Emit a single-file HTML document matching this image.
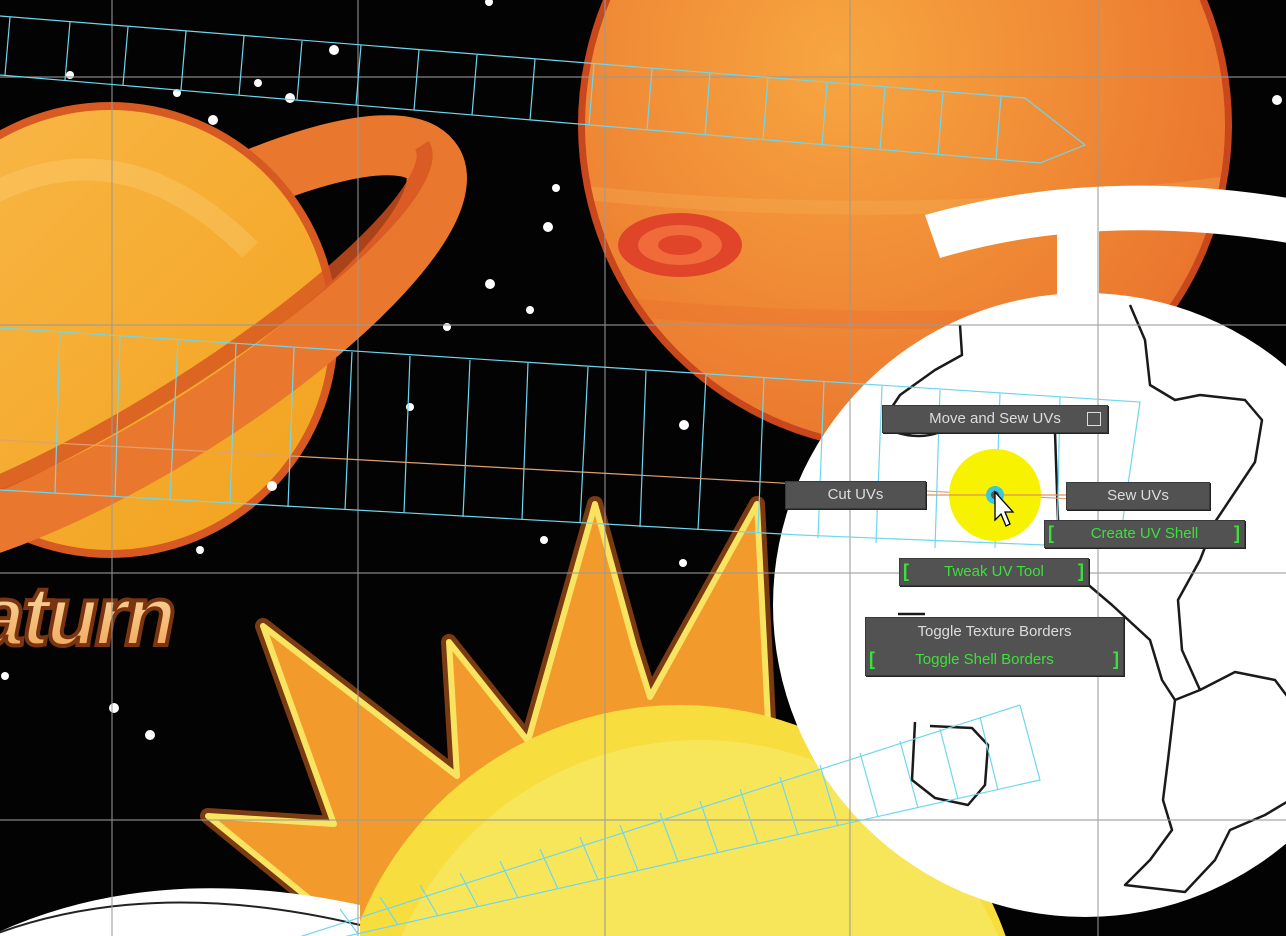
<!DOCTYPE html>
<html><head><meta charset="utf-8"><style>
html,body{margin:0;padding:0;background:#000;overflow:hidden;}
.wrap{position:relative;width:1286px;height:936px;overflow:hidden;background:#030303;}
svg{position:absolute;left:0;top:0;}
.mb{position:absolute;background:#525252;border:1px solid #3a3a3a;box-shadow:1px 1px 0 #222;font-family:"Liberation Sans",sans-serif;font-size:15px;color:#dcdcdc;text-align:center;line-height:26px;height:26px;}
.g{color:#3ce03c;}
.br{position:absolute;top:0;color:#3ce03c;font-weight:bold;font-size:18px;line-height:24px;}
</style></head><body><div class="wrap">
<svg width="1286" height="936" viewBox="0 0 1286 936">
<defs>
<radialGradient id="jup" cx="0.4" cy="0.4" r="0.7"><stop offset="0" stop-color="#f7a640"/><stop offset="1" stop-color="#e9712c"/></radialGradient>
<linearGradient id="sat" x1="0" y1="0" x2="1" y2="1"><stop offset="0" stop-color="#f9b84a"/><stop offset="1" stop-color="#f2a21c"/></linearGradient>
<linearGradient id="txt" x1="0" y1="0" x2="0" y2="1"><stop offset="0" stop-color="#fbe2b0"/><stop offset="1" stop-color="#f0a050"/></linearGradient>
<clipPath id="jc"><circle cx="905" cy="125" r="320"/></clipPath>
</defs>
<!-- Jupiter -->
<circle cx="905" cy="125" r="327" fill="#c9471c"/>
<circle cx="905" cy="125" r="320" fill="url(#jup)"/>
<g clip-path="url(#jc)">
<path d="M560 190 Q900 230 1250 180" stroke="#f6b458" stroke-width="14" fill="none" opacity=".3"/>
<path d="M560 300 Q900 340 1250 300" stroke="#e86a2a" stroke-width="18" fill="none" opacity=".3"/>
</g>
<ellipse cx="680" cy="245" rx="62" ry="32" fill="#e0452a"/>
<ellipse cx="680" cy="245" rx="42" ry="20" fill="#f06a3a"/>
<ellipse cx="680" cy="245" rx="22" ry="10" fill="#e0452a"/>
<!-- Saturn -->
<g transform="rotate(-32 140 345)">
<ellipse cx="140" cy="345" rx="345" ry="95" fill="none" stroke="#e9782e" stroke-width="60"/>
</g>
<circle cx="110" cy="330" r="228" fill="#d65a22"/>
<circle cx="110" cy="330" r="220" fill="url(#sat)"/>
<path d="M-20 200 Q120 120 250 250" stroke="#fbd27a" stroke-width="22" fill="none" opacity=".35"/>
<g transform="rotate(-32 140 345)">
<path d="M-205 345 A345 95 0 0 0 485 345" fill="none" stroke="#e9782e" stroke-width="60"/>
<path d="M-205 325 A345 75 0 0 0 485 325" fill="none" stroke="#d65420" stroke-width="16" opacity=".8"/>
</g>
<text x="-22" y="645" font-family="Liberation Sans,sans-serif" font-style="italic" font-weight="bold" font-size="84" fill="url(#txt)" stroke="#7a3410" stroke-width="4" letter-spacing="-3">aturn</text>
<!-- stars -->
<g fill="#fff">
<circle cx="70" cy="75" r="4"/><circle cx="177" cy="93" r="4"/><circle cx="258" cy="83" r="4"/><circle cx="290" cy="98" r="5"/><circle cx="334" cy="50" r="5"/><circle cx="213" cy="120" r="5"/><circle cx="489" cy="2" r="4"/><circle cx="556" cy="188" r="4"/><circle cx="548" cy="227" r="5"/><circle cx="490" cy="284" r="5"/><circle cx="530" cy="310" r="4"/><circle cx="447" cy="327" r="4"/><circle cx="410" cy="407" r="4"/><circle cx="684" cy="425" r="5"/><circle cx="272" cy="486" r="5"/><circle cx="200" cy="550" r="4"/><circle cx="544" cy="540" r="4"/><circle cx="683" cy="563" r="4"/><circle cx="5" cy="676" r="4"/><circle cx="114" cy="708" r="5"/><circle cx="150" cy="735" r="5"/><circle cx="288" cy="707" r="4"/><circle cx="1277" cy="100" r="5"/>
</g>
<!-- Sun flames -->
<path d="M360 940 L208 816 L334 824 L263 626 L457 776 L449 642 L528 741 L595 504 L634 646 L650 697 L757 504 L770 760 L600 900Z" fill="#ef8a28" stroke="#7a3a12" stroke-width="16" stroke-linejoin="round"/>
<path d="M360 940 L208 816 L334 824 L263 626 L457 776 L449 642 L528 741 L595 504 L634 646 L650 697 L757 504 L770 760 L600 900Z" fill="#f39a2c" stroke="#f8e460" stroke-width="6" stroke-linejoin="round"/>
<circle cx="680" cy="1050" r="345" fill="#f7de3e"/>
<circle cx="700" cy="1065" r="325" fill="#f8e65a"/>
<!-- white bottom-left arc -->
<path d="M-10 936 Q150 860 360 905 L360 936Z" fill="#fff"/>
<path d="M-10 936 Q150 875 360 925" stroke="#222" stroke-width="2" fill="none"/>
<!-- white globe -->
<circle cx="1085" cy="605" r="312" fill="#fff"/>
<path d="M925 215 Q1100 165 1300 200 L1300 245 Q1100 210 940 258Z" fill="#fff"/>
<rect x="1057" y="225" width="42" height="80" fill="#fff"/>
<!-- continent outlines -->
<g stroke="#1a1a1a" stroke-width="2.5" fill="none" stroke-linejoin="round">
<path d="M960 325 L962 355 L935 370 L900 395 L890 410"/>
<path d="M895 432 Q920 440 940 432"/>
<path d="M1055 432 L1058 520"/>
<path d="M1130 305 L1145 340 L1150 385 L1175 400 L1200 395 L1245 400 L1262 420 L1255 462 L1235 492 L1215 522 L1200 560 L1178 600 L1182 650 L1200 690 L1175 700 L1162 680 L1150 640 L1112 605 L1085 582"/>
<path d="M1200 690 L1235 672 L1275 680 L1290 700"/>
<path d="M1175 700 L1168 760 L1163 800 L1172 830 L1150 860 L1125 885 L1185 892 L1215 860 L1230 830 L1265 815 L1290 800"/>
<path d="M915 722 L912 780 L935 798 L968 805 L985 785 L988 745 L972 728 L930 726"/>
<path d="M898 614 L925 614"/>
</g>
<!-- grid -->
<g stroke="#9a9a9a" stroke-width="1.2" opacity=".85">
<line x1="112" y1="0" x2="112" y2="936"/><line x1="358" y1="0" x2="358" y2="936"/><line x1="605" y1="0" x2="605" y2="936"/><line x1="850" y1="0" x2="850" y2="936"/><line x1="1098" y1="0" x2="1098" y2="936"/>
<line x1="0" y1="77" x2="1286" y2="77"/><line x1="0" y1="325" x2="1286" y2="325"/><line x1="0" y1="573" x2="1286" y2="573"/><line x1="0" y1="820" x2="1286" y2="820"/>
</g>
<!-- UV strips -->
<g stroke="#6fd6ee" stroke-width="1.2" fill="none">
<path d="M0 16 L1025 98 L1085 145 L1040 163 L0 75"/>
<path d="M10 17 L5 75 M70 22 L65 80 M128 27 L123 85 M186 31 L181 90 M244 36 L239 95 M302 41 L297 100 M361 45 L356 105 M419 50 L414 110 M477 55 L472 115 M535 59 L530 120 M594 64 L589 125 M652 69 L647 130 M710 73 L705 135 M768 78 L763 140 M827 83 L822 145 M885 87 L880 150 M943 92 L938 155 M1001 96 L996 160"/>
<path d="M0 328 L1140 402 L1120 540 L1045 545 L800 535 L0 490"/>
<path d="M60 332 L55 493 M120 336 L115 497 M178 340 L170 500 M236 344 L230 503 M294 348 L288 507 M352 352 L345 510 M410 356 L404 513 M470 360 L463 517 M528 363 L522 520 M588 367 L580 523 M646 371 L640 527 M706 375 L698 530 M764 378 L758 533 M824 382 L818 538 M882 386 L876 543 M940 390 L935 548 M1000 393 L995 548 M1060 397 L1057 546"/>
<path d="M1020 705 L1040 780 L330 940 M1020 705 L290 940"/>
<path d="M980 717 L998 790 M940 729 L958 799 M900 741 L918 808 M860 753 L878 817 M820 765 L838 826 M780 777 L798 835 M740 789 L758 844 M700 801 L718 853 M660 813 L678 862 M620 825 L638 871 M580 837 L598 880 M540 849 L558 889 M500 861 L518 898 M460 873 L478 907 M420 885 L438 916 M380 897 L398 925 M340 909 L358 934"/>
</g>
<path d="M0 440 L1090 500" stroke="#e0a070" stroke-width="1.2"/>
<!-- marking menu center -->
<circle cx="995" cy="495" r="46" fill="#f6f200"/>
<line x1="924" y1="495" x2="1066" y2="495" stroke="#e09060" stroke-width="1.2"/>
<circle cx="995" cy="495" r="9" fill="#3cc8d8"/>
<circle cx="995" cy="495" r="4" fill="#555"/>
<path d="M995 492 L995 520 L1001 514 L1006 526 L1010 524 L1005 512 L1013 512Z" fill="#fff" stroke="#000" stroke-width="1.3"/>
</svg>
<div class="mb" style="left:882px;top:405px;width:224px;">Move and Sew UVs<span style="position:absolute;right:6px;top:6px;width:12px;height:12px;border:1.5px solid #ddd;"></span></div>
<div class="mb" style="left:785px;top:481px;width:139px;">Cut UVs</div>
<div class="mb" style="left:1066px;top:482px;width:142px;">Sew UVs</div>
<div class="mb g" style="left:1044px;top:520px;width:199px;"><span class="br" style="left:3px">[</span>Create UV Shell<span class="br" style="right:4px">]</span></div>
<div class="mb g" style="left:899px;top:558px;width:188px;"><span class="br" style="left:3px">[</span>Tweak UV Tool<span class="br" style="right:4px">]</span></div>
<div class="mb" style="left:865px;top:617px;width:257px;height:57px;line-height:28px;">Toggle Texture Borders<br><span class="g" style="margin-left:-20px">Toggle Shell Borders</span><span class="br" style="left:3px;top:29px">[</span><span class="br" style="right:4px;top:29px">]</span></div>
</div></body></html>
